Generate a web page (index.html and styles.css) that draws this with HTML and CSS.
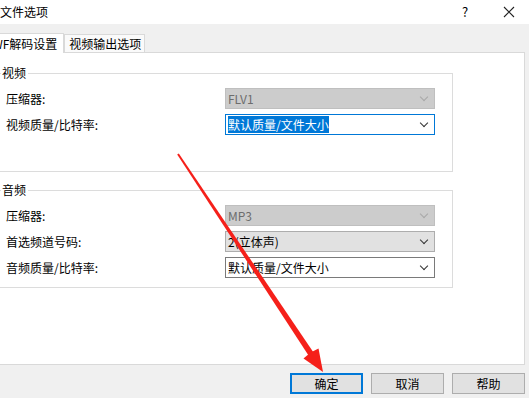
FILE: index.html
```html
<!DOCTYPE html>
<html lang="zh-CN">
<head>
  <meta charset="UTF-8" />
  <title>文件选项</title>
  <link rel="stylesheet" href="styles.css">
</head>
<body>
  <div class="dialog">
    <!-- title bar -->
    <div class="titlebar">
      <span class="title">文件选项</span>
      <span class="tb-btn help">?</span>
      <span class="tb-btn close">
        <svg width="12" height="12" viewBox="0 0 12 12"><path d="M1 1L11 11M11 1L1 11" stroke="#222" stroke-width="1.1" fill="none"/></svg>
      </span>
    </div>

    <!-- tabs -->
    <div class="tabbar">
      <div class="tab active">SWF解码设置</div>
      <div class="tab">视频输出选项</div>
    </div>

    <div class="panel">
      <fieldset class="group video">
        <legend>视频</legend>
        <div class="row">
          <label>压缩器:</label>
          <div class="combo disabled"><span>FLV1</span><i class="chev"></i></div>
        </div>
        <div class="row">
          <label>视频质量/比特率:</label>
          <div class="combo focused"><span class="sel">默认质量/文件大小</span><i class="chev"></i></div>
        </div>
      </fieldset>

      <fieldset class="group audio">
        <legend>音频</legend>
        <div class="row">
          <label>压缩器:</label>
          <div class="combo disabled"><span>MP3</span><i class="chev"></i></div>
        </div>
        <div class="row">
          <label>首选频道号码:</label>
          <div class="combo light"><span>2(立体声)</span><i class="chev"></i></div>
        </div>
        <div class="row">
          <label>音频质量/比特率:</label>
          <div class="combo"><span>默认质量/文件大小</span><i class="chev"></i></div>
        </div>
      </fieldset>
    </div>

    <div class="buttons">
      <button class="btn default">确定</button>
      <button class="btn">取消</button>
      <button class="btn">帮助</button>
    </div>

    <!-- red annotation arrow drawn over the dialog -->
    <svg class="arrow" width="529" height="398" viewBox="0 0 529 398">
      <polygon fill="#f5201a" points="177.2,154.6 178.8,153.4 313.2,352.1 308.4,355.3"/>
      <polygon fill="#f5201a" points="303.5,358.6 310.6,352.5 318.5,348.4 323,372"/>
    </svg>
  </div>
</body>
</html>
```

FILE: styles.css
```css
html, body {
  margin: 0;
  padding: 0;
}
body {
  font-family: "Noto Sans CJK SC", "Liberation Sans", sans-serif;
  font-size: 12px;
  color: #000;
  background: #f0f0f0;
  width: 529px;
  height: 398px;
  overflow: hidden;
}
.dialog {
  position: relative;
  width: 529px;
  height: 398px;
}
.titlebar {
  height: 24px;
  background: #fff;
  display: flex;
  align-items: center;
}
.title {
  flex: 1;
  line-height: 24px;
}
.tb-btn {
  text-align: center;
  line-height: 24px;
  font-size: 13px;
}
.tb-btn.help {
  width: 20px;
  margin-right: 24px;
}
.tb-btn.close {
  display: flex;
  justify-content: center;
  align-items: center;
  width: 20px;
  margin-right: 10px;
}
.tabbar {
  height: 28px;
  display: flex;
  align-items: flex-end;
  margin-left: -15px;
}
.tab {
  height: 17px;
  line-height: 17px;
  padding: 0 3px 0 4px;
  border: 1px solid #d9d9d9;
  border-bottom: none;
  background: #fafafa;
  white-space: nowrap;
}
.tab.active {
  position: relative;
  z-index: 1;
  height: 19px;
  line-height: 19px;
  margin-bottom: -1px;
  background: #fff;
  padding: 0 6px 0 0;
  border-left: none;
}
.panel {
  width: 524px;
  height: 299px;
  background: #fff;
  border-top: 1px solid #d9d9d9;
  border-right: 1px solid #d9d9d9;
  border-bottom: 1px solid #d9d9d9;
  padding-top: 12px;
  box-sizing: content-box;
}
.group {
  box-sizing: border-box;
  width: 463px;
  margin: 0 0 0 -10px;
  padding: 8px 0 0 10px;
  border: 1px solid #dcdcdc;
}
.group legend {
  padding: 0 2px 0 1px;
  line-height: 16px;
}
.group.video {
  padding-top: 7px;
  padding-bottom: 36px;
}
.group.audio {
  margin-top: 10px;
  padding-top: 7px;
  padding-bottom: 9px;
}
.row {
  display: flex;
  align-items: center;
  padding-left: 5px;
  height: 21px;
  margin-bottom: 5px;
}
.row:last-child {
  margin-bottom: 0;
}
.row label {
  width: 219px;
  flex: none;
}
.combo {
  box-sizing: border-box;
  width: 210px;
  height: 21px;
  border: 1px solid #7a7a7a;
  background: #fff;
  display: flex;
  align-items: center;
  padding-left: 2px;
  padding-right: 6px;
}
.combo span {
  flex: 1;
  line-height: 17px;
}
.combo span.sel {
  flex: none;
  background: #0078d7;
  color: #fff;
  margin-right: auto;
}
.combo.focused {
  border-color: #0078d7;
}
.combo.disabled {
  background: #cccccc;
  border-color: #bfbfbf;
  color: #6d6d6d;
}
.combo.light {
  background: #e1e1e1;
  border-color: #adadad;
}
.chev {
  width: 5px;
  height: 5px;
  border-right: 1px solid #333;
  border-bottom: 1px solid #333;
  transform: rotate(45deg);
  margin-top: -4px;
  margin-right: 1px;
}
.combo.disabled .chev {
  border-color: #a8a8a8;
}
.buttons {
  display: flex;
  justify-content: flex-end;
  gap: 8px;
  padding: 8px 4px 0 0;
}
.btn {
  box-sizing: border-box;
  width: 73px;
  height: 21px;
  border: 1px solid #adadad;
  background: #e1e1e1;
  font-family: inherit;
  font-size: 12px;
  padding: 0;
  color: #000;
}
.btn.default {
  border: 2px solid #0078d7;
}
.arrow {
  position: absolute;
  left: 0;
  top: 0;
  pointer-events: none;
}
```
